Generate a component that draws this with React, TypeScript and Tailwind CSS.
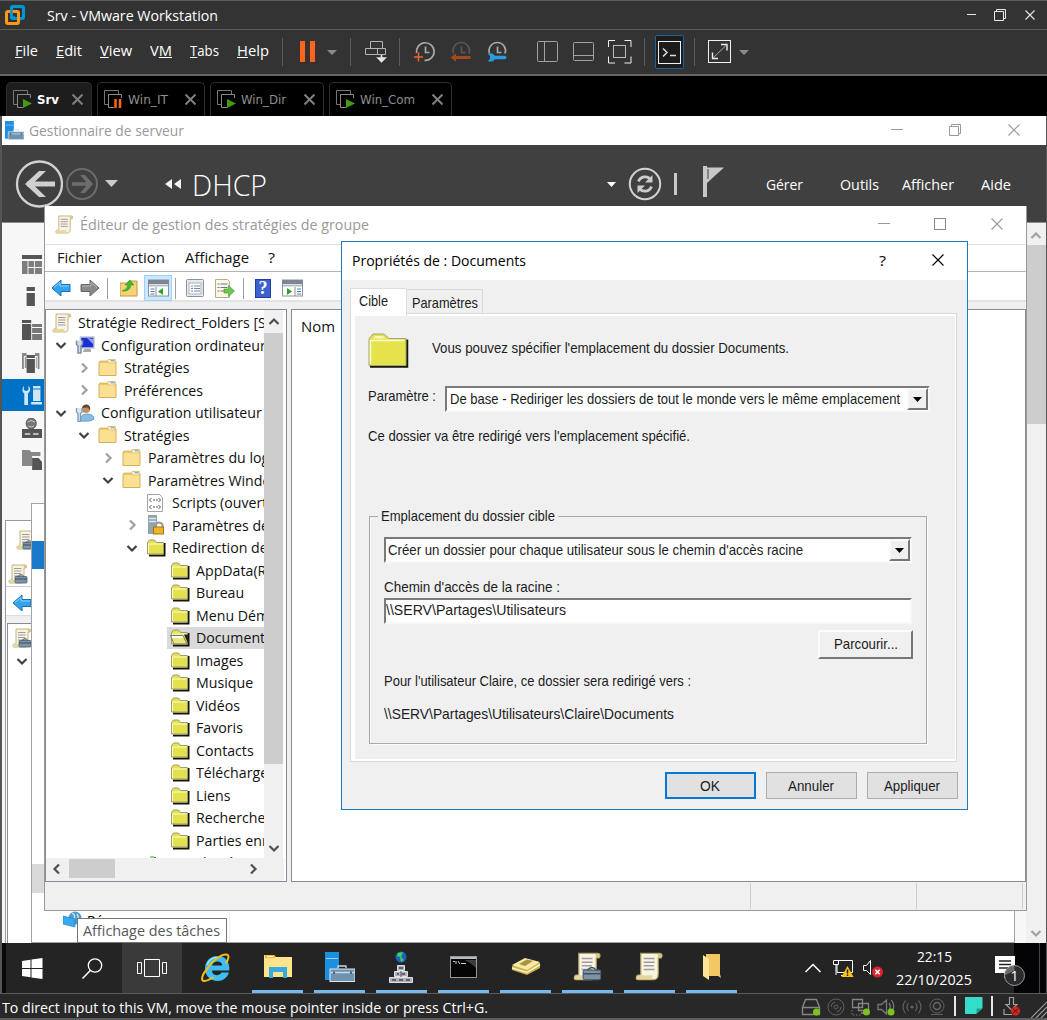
import React, { useLayoutEffect, useRef } from "react";

type P = { className?: string; children?: React.ReactNode };

/* Text squeezed or stretched horizontally to the width of its box. */
function Fit({ className = "", children }: P) {
  const box = useRef<HTMLSpanElement>(null);
  const text = useRef<HTMLSpanElement>(null);
  useLayoutEffect(() => {
    const b = box.current;
    const t = text.current;
    if (!b || !t) return;
    t.style.transform = "none";
    const natural = t.getBoundingClientRect().width;
    if (natural > 0) t.style.transform = `scaleX(${b.getBoundingClientRect().width / natural})`;
  }, []);
  return (
    <span ref={box} className={`block shrink-0 whitespace-nowrap ${className}`}>
      <span ref={text} className="inline-block origin-left">{children}</span>
    </span>
  );
}

function Svg({ w, h, className = "", children }: P & { w: number; h: number }) {
  return (
    <svg width={w} height={h} viewBox={`0 0 ${w} ${h}`} fill="none" className={`block shrink-0 ${className}`}>
      {children}
    </svg>
  );
}

const Minimize = ({ className = "", n = 12 }: { className?: string; n?: number }) => (
  <Svg w={n} h={12} className={className}><path d={`M0 5.5H${n}`} stroke="currentColor" /></Svg>
);
const Restore = ({ className = "" }: P) => (
  <Svg w={12} h={12} className={className}>
    <path d="M.5 2.5h9v9h-9zM2.5 2.5v-2h9v9h-2" stroke="currentColor" />
  </Svg>
);
const Close = ({ className = "", n = 12 }: { className?: string; n?: number }) => (
  <Svg w={n} h={n} className={className}>
    <path d={`M.5 .5L${n - 0.5} ${n - 0.5}M${n - 0.5} .5L.5 ${n - 0.5}`} stroke="currentColor" strokeWidth="1.1" />
  </Svg>
);
const Down = ({ className = "", w = 10, h = 5 }: { className?: string; w?: number; h?: number }) => (
  <Svg w={w} h={h} className={className}><path d={`M0 0H${w}L${w / 2} ${h}Z`} fill="currentColor" /></Svg>
);

/* ---------- Host window ---------- */

function TitleBar() {
  return (
    <div className="flex h-[30px] shrink-0 items-center border-y border-[#5c5c5c] bg-[#333] pl-[5px] text-white">
      <Svg w={20} h={20}>
        <rect x="6.5" y="1.5" width="12" height="12" rx="1.5" stroke="#0096d6" strokeWidth="3" />
        <rect x="1.5" y="6.5" width="12" height="12" rx="1.5" stroke="#f8981d" strokeWidth="3" />
        <path d="M6.5 5v7.5h3.500" stroke="#0096d6" strokeWidth="2.500" />
      </Svg>
      <Fit className="ml-[22px] w-[171px] text-[15px]">Srv - VMware Workstation</Fit>
      <div className="ml-auto flex items-center text-[#e8e8e8]">
        <Minimize n={9} />
        <Restore className="ml-[18px]" />
        <Close n={10} className="mr-[12px] ml-[19px]" />
      </div>
    </div>
  );
}

const Sep = ({ className = "" }: P) => <div className={`h-7 w-px shrink-0 bg-[#5c5c5c] ${className}`} />;

function Clock({ kind }: { kind: "add" | "back" | "manage" }) {
  const c = kind === "back" ? "#575757" : "#a8a8a8";
  return (
    <Svg w={22} h={22}>
      <path d={kind === "add" ? "M2.600 12A8.800 8.800 0 1 1 10.500 19.300" : "M3.600 12.500A8.200 8.200 0 1 1 19 12.500"} stroke={c} strokeWidth="1.700" />
      <path d="M11.500 5.500V11.500h4" stroke={c} strokeWidth="1.700" />
      {kind === "add" && <path d="M0 16h9M4.500 11.500v9" stroke="#f4642a" strokeWidth="1.500" />}
      {kind === "back" && <path d="M6 12.500v2.500h14.500v3H6v2.500l-5.500-4z" fill="#a04a20" />}
      {kind === "manage" && (
        <path d="M1.500 12.500h5l2.500 2.200h9.500q2 0 2 1.800t-2 1.800H9L6.500 20.500h-5L4 18v-3z" fill="#2a9be0" />
      )}
    </Svg>
  );
}

function MenuBar() {
  return (
    <div className="flex h-[46px] shrink-0 items-center border-b-2 border-[#666] bg-[#333] pl-[15px] text-[15px] text-white">
      <div className="mb-[5px] flex gap-[18px]">
        <Fit className="w-[23px]"><u>F</u>ile</Fit>
        <Fit className="w-[26px]"><u>E</u>dit</Fit>
        <Fit className="w-[32px]"><u>V</u>iew</Fit>
        <Fit className="w-[22px]">V<u>M</u></Fit>
        <Fit className="w-[29px]"><u>T</u>abs</Fit>
        <Fit className="w-[32px]"><u>H</u>elp</Fit>
      </div>
      <Sep className="ml-[13px]" />
      <div className="-mt-px ml-[17px] h-[21px] w-[5px] bg-[#ff641c]" />
      <div className="-mt-px ml-[5px] h-[21px] w-[5px] bg-[#ff641c]" />
      <Down className="ml-[12px] text-[#8a8a8a]" />
      <Sep className="ml-[13px]" />
      <Svg w={22} h={22} className="ml-[14px]">
        <path d="M5.500 7V.5h12V7M.5 7.500h12v6H.5zM12.500 7.500h8v6h-8z" stroke="#b4b4b4" />
        <path d="M16.500 14v6M13 17l3.500 3.500L20 17z" stroke="#e6e6e6" strokeWidth="1.600" fill="#e6e6e6" />
      </Svg>
      <Sep className="ml-[12px]" />
      <div className="ml-[14px]"><Clock kind="add" /></div>
      <div className="ml-[14px]"><Clock kind="back" /></div>
      <div className="ml-[14px]"><Clock kind="manage" /></div>
      <Sep className="ml-[14px] bg-transparent" />
      <Svg w={22} h={22} className="ml-[14px]">
        <rect x=".5" y=".5" width="20" height="20" rx="1" stroke="#a2a2a2" /><path d="M7.500 1v19" stroke="#a2a2a2" />
      </Svg>
      <Svg w={22} h={20} className="ml-[14px]">
        <rect x=".5" y=".5" width="20" height="18" rx="1" stroke="#a2a2a2" /><path d="M1 13.500h19" stroke="#a2a2a2" />
      </Svg>
      <Svg w={24} h={24} className="ml-[13px]">
        <path d="M.5 7V.5H7M16.500 .5H23V7M23 16.500V23h-6.500M7 23H.5v-6.500" stroke="#f0f0f0" /><rect x="5.500" y="5.500" width="12" height="12" stroke="#bbb" />
      </Svg>
      <Sep className="ml-[12px]" />
      <div className="ml-[10px] flex h-[34px] w-[29px] items-center justify-center rounded-xs border border-[#1b64a0] bg-[#1c1c1c]">
        <Svg w={23} h={23}>
          <rect x=".5" y=".5" width="22" height="22" stroke="#f0f0f0" />
          <path d="M5 7.500L9 11.500 5 15.500M12 14.500h6" stroke="#ddd" strokeWidth="1.500" />
        </Svg>
      </div>
      <Sep className="ml-[10px]" />
      <Svg w={24} h={24} className="ml-[13px]">
        <rect x=".5" y=".5" width="22" height="22" stroke="#f0f0f0" />
        <path d="M13 4.500h6v6M10 18.500H4.500v-6" stroke="#eee" strokeWidth="1.400" /><path d="M5 18L18.500 5" stroke="#aaa" />
      </Svg>
      <Down className="ml-[7px] text-[#8a8a8a]" />
    </div>
  );
}

function VmTab({ label, paused, active, width, text }: { label: string; paused?: boolean; active?: boolean; width: string; text: string }) {
  return (
    <div className={`flex h-[34px] items-center rounded-t-[5px] border border-b-0 border-[#2d2d2d] pb-px pl-[6px] ${width} ${active ? "bg-[#1d1d1d] font-bold text-white" : "text-[#8e8e8e]"}`}>
      <Svg w={19} h={19}>
        <path d="M4 14.500H.5V.5h14V4" stroke="#777" /><path d="M10 17.500H4.500V4.500h13V8" stroke="#8a8a8a" />
        {paused ? <path d="M11.500 9v9M16 9v9" stroke="#ff641c" strokeWidth="2.500" /> : <path d="M10 9l9 4.500-9 4.500z" fill="#449a12" />}
      </Svg>
      <Fit className={`mt-px ml-[5px] ${text}`}>{label}</Fit>
      <Close n={11} className="mr-[8px] ml-auto text-[#808080] [&>path]:stroke-2" />
    </div>
  );
}

function TabBar() {
  return (
    <div className="flex h-[40px] shrink-0 items-end gap-[5px] bg-black pl-[6px] font-['DejaVu_Sans'] text-[13px]">
      <VmTab label="Srv" active width="w-[86px]" text="w-[22px]" />
      <VmTab label="Win_IT" paused width="w-[108px]" text="w-[40px]" />
      <VmTab label="Win_Dir" width="w-[114px]" text="w-[45px]" />
      <VmTab label="Win_Com" width="w-[123px]" text="w-[55px]" />
    </div>
  );
}

/* ---------- Shared drawings ---------- */

const Scroll = ({ s = 20, tools, className = "" }: { s?: number; tools?: boolean; className?: string }) => (
  <svg width={s} height={s} viewBox="0 0 20 20" fill="none" className={`block shrink-0 ${className}`}>
    <path d="M4 1h13c2 0 2 2 1 3h-2v11c0 3-1 4-3 4H2c-2 0-1-3 0-3h2z" fill="#f9f4e0" stroke="#b5a468" strokeWidth=".8" />
    <path d="M15.500 1.500c2.500-1 3.500 1 2.500 2.500h-2z" fill="#d9c581" /><path d="M1 18.500c0-2 1-2.500 2-2.500h9v3H2z" fill="#e6d79d" />
    <path d="M6 4.500h7.500M6 7h7.500M6 9.500h7M6 12h7.500" stroke="#9d99a8" />
    {tools && <><rect x="7" y="12.500" width="12" height="6.500" rx="1" fill="#7e93a6" stroke="#4d6275" strokeWidth=".8" /><path d="M10 12.500q3-3.500 6 0M7 15h12" stroke="#3c4d5d" /></>}
  </svg>
);
const ServerManagerIcon = ({ s = 20 }: { s?: number }) => (
  <svg width={s} height={s} viewBox="0 0 30 30" fill="none" className="block shrink-0">
    <path d="M0 0h14v28H0z" fill="#1b8fe0" /><path d="M1 6.500h12" stroke="#9ad0f5" />
    <rect x="5" y="17" width="25" height="12.500" fill="#6e93b0" stroke="#dfe9f0" /><path d="M13 16v-2h8v2M6 20.500h24" stroke="#c8d9e5" strokeWidth="1.300" /><path d="M9 19.500v2.500M26 19.500v2.500" stroke="#49637a" strokeWidth="2" />
  </svg>
);
const BlueArrow = ({ right }: { right?: boolean }) => (
  <Svg w={20} h={18} className={right ? "-scale-x-100" : ""}>
    <path d="M1 9l9-8v4.500h9v7h-9V17z" fill={right ? "#8a8a8a" : "#34a3ec"} stroke={right ? "#666" : "#1173b8"} />
    <path d="M3 8.500L9 3.500V7h9" stroke={right ? "#b5b5b5" : "#8fd4ff"} />
  </Svg>
);
const Chevron = ({ d, className = "" }: { d: "up" | "down" | "left" | "right"; className?: string }) => {
  const path = { up: "M1.500 8L6 3.500 10.500 8", down: "M1.500 4L6 8.500 10.500 4", left: "M8 1.500L3.500 6 8 10.500", right: "M4 1.500L8.500 6 4 10.500" }[d];
  return <Svg w={12} h={12} className={className}><path d={path} stroke="currentColor" strokeWidth="2.200" /></Svg>;
};

/* ---------- Server manager ---------- */

function ServerManagerHeader() {
  return (
    <>
      <div className="flex h-[29px] shrink-0 items-center bg-white pl-[3px] text-[15px] text-[#999]">
        <ServerManagerIcon s={19} />
        <Fit className="mb-[2px] ml-[5px] w-[155px]">Gestionnaire de serveur</Fit>
        <div className="mr-[26px] mb-px ml-auto flex items-center">
          <Minimize /><Restore className="ml-[46px]" /><Close className="ml-[47px]" />
        </div>
      </div>
      <div className="flex h-[78px] shrink-0 items-center border-b border-[#8c8c8c] bg-[#404040] pl-[13px] text-[15px] text-white">
        <Svg w={48} h={48}>
          <circle cx="24.500" cy="24" r="22.500" stroke="#d2d2d2" strokeWidth="2.300" />
          <path d="M12 24h28" stroke="#d0d0d0" strokeWidth="5" /><path d="M31 11h-7L10 24 24 37h7L17.500 24z" fill="#d0d0d0" />
        </Svg>
        <Svg w={34} h={34} className="ml-[2px]">
          <circle cx="17" cy="17" r="15" stroke="#6d6d6d" strokeWidth="2" />
          <path d="M7 17h18" stroke="#6d6d6d" strokeWidth="3.500" /><path d="M15 8h5l8 9-8 9h-5l8-9z" fill="#6d6d6d" />
        </Svg>
        <Down w={13} h={7} className="ml-[6px] text-[#ccc]" />
        <Svg w={17} h={10} className="ml-[47px]"><path d="M7 0v10L0 5zM16 0v10L9 5z" fill="#f2f2f2" /></Svg>
        <Fit className="mt-[2px] ml-[10px] w-[75px] text-[29px] font-light">DHCP</Fit>
        <Down w={9} h={5} className="mt-px ml-[340px]" />
        <Svg w={34} h={34} className="ml-[12px]">
          <circle cx="17" cy="17" r="15.200" stroke="#d2d2d2" strokeWidth="2" />
          <path d="M10.500 14.500c2-5.500 9-6 12-2M23.500 19.500c-2 5.500-9 6-12 2" stroke="#ccc" strokeWidth="2.800" />
          <path d="M24.500 8v7.500h-7.500zM9.500 26v-7.500H17z" fill="#ccc" />
        </Svg>
        <div className="ml-[12px] h-[22px] w-[3px] bg-[#c8c8c8]" />
        <Svg w={23} h={31} className="-mt-[5px] ml-[25px]"><path d="M1 0h4v31H1z" fill="#c8c8c8" /><path d="M5 1.500h17L5 17z" fill="#c8c8c8" /><path d="M6 3v10" stroke="#404040" /></Svg>
        <Fit className="ml-[41px] w-[37px]">Gérer</Fit>
        <Fit className="ml-[37px] w-[39px]">Outils</Fit>
        <Fit className="ml-[23px] w-[52px]">Afficher</Fit>
        <Fit className="ml-[27px] w-[30px]">Aide</Fit>
      </div>
    </>
  );
}

const sideIcons = [
  <><path d="M0 0h22v4H0z" fill="#555" /><path d="M0 6h6v13H0zM7 6h6v6H7zM14 6h8v6h-8zM7 13h6v6H7zM14 13h8v6h-8z" fill="#7d7d7d" /></>,
  <><path d="M5 0h9v4H5zM5 6h9v13H5z" fill="#555" /></>,
  <><path d="M0 0h10v3H0zM0 4h10v16H0z" fill="#555" /><path d="M11 4h11v3H11zM11 8h11v5H11zM11 14h11v6H11z" fill="#777" /></>,
  <><path d="M0 0h5v3H2v13H0zM14 0h5v16h-2V3h-3z" fill="#888" /><path d="M3 4h2v11H3zM15 4h1v11h-1z" fill="#999" /><path d="M5 2h9v3H5zM5 6h9v14H5z" fill="#555" /></>,
  <><path d="M2 1v4l2.500 1L7 5V1c3 2 2 6-.5 7.500V20h-4V8.500C0 7 0 3 2 1zM12 1h8v15h-8zM10 17h12v2.500H10z" fill="#cfe7f8" /><path d="M12 4h8" stroke="#0072c6" /></>,
  <><circle cx="10" cy="5.500" r="5.500" fill="#777" stroke="#555" /><path d="M6 4q4-3 8 0M7 8q3 2 6 0" stroke="#ccc" /><path d="M0 11h22v9H0z" fill="#555" /><path d="M3 16h6M12 16h6" stroke="#ddd" strokeWidth="1.500" /></>,
  <><path d="M0 0h8l2 2h10v4h-9v10H0z" fill="#888" /><path d="M11 8h7l4 4v8H11z" fill="#555" /></>,
];

function Sidebar() {
  return (
    <div className="h-full w-[50px] shrink-0 bg-[#f7f7f7] pt-[25.5px]">
      {sideIcons.map((icon, i) => (
        <div key={i} className={`flex h-[32.6px] items-center pl-[20px] ${i === 4 ? "bg-[#0072c6]" : ""}`}>
          <Svg w={20} h={20} className="[&]:w-5"><g transform="scale(.92 1)">{icon}</g></Svg>
        </div>
      ))}
    </div>
  );
}

function MainScrollbar() {
  return (
    <div className="flex h-full w-5 shrink-0 flex-col items-center bg-[#f0f0f0] text-[#a0a0a0]">
      <div className="flex h-[22px] items-center pt-1"><Chevron d="up" /></div>
      <div className="h-[179px] w-full bg-[#cdcdcd]" />
      <Chevron d="down" className="mt-auto mb-1" />
    </div>
  );
}

/* ---------- Background windows ---------- */

function NetworkWindow() {
  return (
    <div className="absolute top-[387px] left-[29px] flex h-[440px] w-[984px] flex-col border border-[#a3a3a3] bg-white">
      <div className="mt-[10px] ml-[12px] h-[16px] w-4 bg-[#e9cf7c]" />
      <div className="mt-[11px] h-[28px] w-full bg-[#1979ca]" />
      <div className="mt-[295px] h-[30px] w-full bg-[#d9d9d9]" />
      <div className="ml-[31px] flex h-[49px] w-[167px] items-center border-r border-[#eee] pt-[4px] text-[15px] text-black">
        <Svg w={20} h={18}>
          <circle cx="12" cy="7" r="6.500" fill="#4f9cc7" /><path d="M9 2q4 2 2 6M14 3q2 3 1 8" stroke="#b7e1ee" strokeWidth="1.500" />
          <path d="M0 5l12 3v8L0 13z" fill="#35aaf2" stroke="#1479b8" strokeWidth=".6" />
        </Svg>
        <Fit className="ml-[4px] w-[47px]">Réseau</Fit>
      </div>
    </div>
  );
}

function PolicyConsoleWindow() {
  return (
    <div className="absolute top-[404px] left-[3px] flex h-[423px] w-[26px] flex-col overflow-hidden border-t border-l border-[#9a9a9a] bg-white">
      <Scroll tools className="mt-[9px] ml-[10px]" />
      <Scroll tools className="mt-[14px] ml-[2px]" />
      <div className="mt-[2px] h-px w-full shrink-0 bg-[#ccc]" />
      <div className="mt-[7px] ml-[6px] shrink-0"><BlueArrow /></div>
      <div className="mt-[3px] h-[8px] w-full shrink-0 border-t border-[#ddd] bg-[#f0f0f0]" />
      <div className="ml-px flex grow flex-col border-t border-l border-[#868b94]">
        <Scroll tools className="mt-[4px] ml-[4px]" />
        <Chevron d="down" className="mt-[7px] ml-[8px] text-[#404040]" />
      </div>
    </div>
  );
}

/* ---------- Group policy editor ---------- */

const TreeFolder = () => (
  <Svg w={20} h={20}>
    <path d="M1 3.500L2 2.500h8v-1.500h7.500v3V17.500H1z" fill="#e9c773" /><path d="M1 4h17v13.500H1z" fill="#fbdf93" stroke="#d7b05c" />
    <path d="M10 1.500h7v3.500h-7z" fill="#fff3cd" stroke="#d7b05c" strokeWidth=".6" /><path d="M12.500 2.800h4" stroke="#4aa0dd" />
  </Svg>
);
const YellowFolder = ({ open }: { open?: boolean }) => (
  <Svg w={20} h={19}>
    <path d="M3 17.500h15.500V5" stroke="#161600" strokeWidth="2" />
    <path d="M1.500 15V4.500l2-2.500h5l2 2.500h7V16H1.500z" fill="#e3e24c" stroke="#9b9b78" />
    <path d="M2.500 15v-9h14" stroke="#fdfdcf" />
    {open && <><path d="M.5 7.500h12.500l4 8.500H4z" fill="#e9e67a" stroke="#777" /><path d="M2 9h11" stroke="#fff" strokeWidth="2" /><path d="M14 6.500h4v9z" fill="#222" /></>}
  </Svg>
);
const ComputerIcon = () => (
  <Svg w={20} h={18}><rect x="5.500" y="1" width="13.500" height="11" fill="#1c2ed8" stroke="#c5c8ce" strokeWidth="1.500" /><path d="M12 2l6 1v5z" fill="#8ca9f8" /><path d="M9 13h7v3H8z" fill="#aaa" /><path d="M1.500 4.500v4l1.500 1.500v7h3v-7l1.500-2V4.500" stroke="#7c91a6" strokeWidth="1.500" fill="#cfdbe6" /></Svg>
);
const UserIcon = () => (
  <Svg w={20} h={18}><circle cx="11" cy="5" r="4" fill="#c68e5d" /><path d="M7 4q1-4 5-3.500 4 1 3 6l-2-3z" fill="#5c483a" /><path d="M5 17q0-7 7-7t7 5q-3 3-14 2z" fill="#88bce5" stroke="#4d8bb9" strokeWidth=".7" /><path d="M1.500 4v4L3 9.500v8h2.500v-8L7 8V4" stroke="#7d99b4" strokeWidth="1.300" fill="#dbe8f2" /></Svg>
);
const ScriptIcon = () => (
  <Svg w={20} h={20}><path d="M1.500 1.500h12l3 3v14h-15z" fill="#fff" stroke="#a5a5a5" /><path d="M5.500 5L3.500 7l2 2M12.500 5l2 2-2 2M5.500 12l-2 2 2 2M12.500 12l2 2-2 2" stroke="#555" /><path d="M7 7h5M7 14h5" stroke="#555" strokeDasharray="2 1" /></Svg>
);
const SecurityIcon = () => (
  <Svg w={20} h={20}><path d="M2 0h9v19H2z" fill="#92a3b2" /><path d="M3 3.500h7M3 6.500h7" stroke="#e0e7ed" strokeWidth="1.500" /><path d="M9.500 12V9.500q3.500-4 7 0V12" stroke="#9a9a9a" strokeWidth="2" /><rect x="7.500" y="12" width="10" height="7" fill="#eeb52c" stroke="#a87407" /></Svg>
);
const QosIcon = () => (
  <Svg w={20} h={20}><path d="M4 3h4v15H4z" fill="#8be07b" /><path d="M8 4h2v14H8z" fill="#2c8a2c" /><path d="M12 9h4v9h-4z" fill="#88a" /></Svg>
);

const indent = ["pl-[6px]", "pl-[29px]", "pl-[52px]", "pl-[76px]", "pl-[100px]", "pl-[124px]"];
type Node = [number, React.ReactNode, string, ("down" | "right")?, boolean?];
const tree: Node[] = [
  [0, <Scroll />, "Stratégie Redirect_Folders [SRV"],
  [1, <ComputerIcon />, "Configuration ordinateur", "down"],
  [2, <TreeFolder />, "Stratégies", "right"],
  [2, <TreeFolder />, "Préférences", "right"],
  [1, <UserIcon />, "Configuration utilisateur", "down"],
  [2, <TreeFolder />, "Stratégies", "down"],
  [3, <TreeFolder />, "Paramètres du logiciel", "right"],
  [3, <TreeFolder />, "Paramètres Windows", "down"],
  [4, <ScriptIcon />, "Scripts (ouverture"],
  [4, <SecurityIcon />, "Paramètres de sécurité", "right"],
  [4, <YellowFolder />, "Redirection de dossiers", "down"],
  [5, <YellowFolder />, "AppData(Roaming)"],
  [5, <YellowFolder />, "Bureau"],
  [5, <YellowFolder />, "Menu Démarrer"],
  [5, <YellowFolder open />, "Documents", undefined, true],
  [5, <YellowFolder />, "Images"],
  [5, <YellowFolder />, "Musique"],
  [5, <YellowFolder />, "Vidéos"],
  [5, <YellowFolder />, "Favoris"],
  [5, <YellowFolder />, "Contacts"],
  [5, <YellowFolder />, "Téléchargements"],
  [5, <YellowFolder />, "Liens"],
  [5, <YellowFolder />, "Recherches"],
  [5, <YellowFolder />, "Parties enregistrées"],
  [4, <QosIcon />, "QoS basée sur la stratégie"],
];

function TreePane() {
  return (
    <div className="flex h-[573px] w-[242px] shrink-0 flex-col border border-[#868b94] bg-white">
      <div className="flex h-[548px]">
        <div className="w-[218px] shrink-0 overflow-hidden pt-[1.500px]">
          {tree.map(([level, icon, label, state, selected], i) => (
            <div key={i} className={`flex h-[22.5px] items-center ${indent[level]}`}>
              {level > 0 && level < 5 && (
                <span className={`-ml-[20px] w-[20px] shrink-0 ${state === "right" ? "text-[#a0a0a0]" : "text-[#404040]"}`}>
                  {state && <Chevron d={state} />}
                </span>
              )}
              <span className={`-ml-[3px] flex h-full grow items-center pl-[3px] ${selected ? "bg-[#d9d9d9]" : ""}`}>
                {icon}
                <span className="mb-px ml-[6px] origin-left scale-x-[0.945] whitespace-nowrap">{label}</span>
              </span>
            </div>
          ))}
        </div>
        <div className="flex w-[19px] shrink-0 flex-col items-center bg-[#f0f0f0] text-[#505050]">
          <Chevron d="up" className="mt-[6px] mb-[5px]" />
          <div className="h-[431px] w-full bg-[#cdcdcd]" />
          <Chevron d="down" className="mt-auto mb-[4px]" />
        </div>
      </div>
      <div className="flex h-[23px] w-[238px] items-center bg-[#f0f0f0] pb-[2px] pl-[5px] text-[#505050]">
        <Chevron d="left" />
        <div className="ml-[6px] h-[19px] w-[46px] bg-[#cdcdcd]" />
        <Chevron d="right" className="mr-[25px] ml-auto" />
      </div>
    </div>
  );
}

const PaneIcon = ({ flip }: { flip?: boolean }) => (
  <Svg w={21} h={18}>
    <rect x=".5" y="1" width="20" height="16" fill="#fff" stroke="#8b929b" /><path d="M0 1h21v4H0z" fill="#7c8793" /><path d="M1 6.500h19" stroke="#b7bec6" strokeWidth="2" />
    <path d={flip ? "M13 8v9" : "M8 8v9"} stroke="#8b929b" /><path d={flip ? "M15 10h4M15 12.500h4M15 15h4" : "M2.500 10h4M2.500 12.500h4M2.500 15h4"} stroke="#4a7fb5" />
    <path d={flip ? "M5 9l5 3.500L5 16z" : "M15 9l-5 3.500L15 16z"} fill="#28a428" />
  </Svg>
);
const ToolSep = ({ className = "" }: P) => <div className={`h-[21px] w-px bg-[#a0a0a0] ${className}`} />;

function EditorWindow() {
  return (
    <div className="absolute top-[90px] left-[42px] flex h-[705px] w-[983px] flex-col border border-t-0 border-[#999] bg-[#f0f0f0] text-[15px] text-[#111]">
      <div className="flex h-[39px] shrink-0 items-center border-b border-[#ddd] bg-white pl-[10px] text-[#999]">
        <Scroll s={19} className="mb-px" />
        <Fit className="mb-[2px] ml-[6px] w-[289px]">Éditeur de gestion des stratégies de groupe</Fit>
        <div className="mr-[23px] mb-[2px] ml-auto flex items-center">
          <Minimize />
          <Svg w={12} h={12} className="ml-[44px]"><rect x=".5" y=".5" width="11" height="11" stroke="#888" /></Svg>
          <Close className="ml-[45px]" />
        </div>
      </div>
      <div className="flex h-[27px] shrink-0 items-center border-b border-[#b0b4ba] bg-white pb-[2px] pl-[12px]">
        <Fit className="w-[45px]">Fichier</Fit>
        <Fit className="ml-[19px] w-[44px]">Action</Fit>
        <Fit className="ml-[20px] w-[64px]">Affichage</Fit>
        <Fit className="ml-[19px] w-[7px]">?</Fit>
      </div>
      <div className="flex h-[30px] shrink-0 items-center border-b-2 border-[#e3e3e3] bg-white pt-[4px] pl-[6px]">
        <BlueArrow />
        <div className="ml-[9px]"><BlueArrow right /></div>
        <ToolSep className="ml-[7px]" />
        <Svg w={18} h={18} className="ml-[12px]"><path d="M0 4h7l2-2h8v15H0z" fill="#f4d37c" stroke="#c49a3d" /><path d="M2 12q5-1 6-6H5l5-5 4 5h-3q-1 7-9 6z" fill="#42b82a" stroke="#2b8a1b" strokeWidth=".5" /></Svg>
        <div className="ml-[6px] flex h-[26px] w-[28px] items-center justify-center border border-[#99d1ff] bg-[#cce8ff]"><PaneIcon /></div>
        <ToolSep className="ml-[3px]" />
        <Svg w={19} h={19} className="ml-[10px]"><rect x=".5" y=".5" width="17" height="17" rx="1" fill="#e8ebee" stroke="#8a929c" /><rect x="3" y="4" width="12" height="11" fill="#fff" stroke="#a9b1ba" /><path d="M5 7h2M5 9.500h2M5 12h2M8 7h6M8 9.500h6M8 12h6" stroke="#7089a4" /></Svg>
        <Svg w={20} h={19} className="ml-[10px]"><path d="M.5 .5h12l2 2v16H.5z" fill="#fdf7e0" stroke="#b4ad93" /><path d="M2.500 5h2M2.500 8.500h2M2.500 12h2M5.500 5h7M5.500 8.500h7M5.500 12h5" stroke="#65749c" /><path d="M9 10h4.500V6.500l6 5.500-6 5.500V14H9z" fill="#6cc94e" stroke="#3f962b" strokeWidth=".6" /></Svg>
        <ToolSep className="ml-[8px]" />
        <div className="ml-[11px] flex h-[19px] w-[16px] items-center justify-center border border-[#1c3fa8] bg-[#3d62cf] font-['Liberation_Serif'] text-[18px] font-bold text-white">?</div>
        <div className="ml-[11px]"><PaneIcon flip /></div>
      </div>
      <div className="flex shrink-0 gap-[4px] pt-[7px]">
        <TreePane />
        <div className="h-[573px] grow border border-[#868b94] bg-white pt-[6px] pl-[9px]"><Fit className="w-[34px]">Nom</Fit></div>
      </div>
      <div className="flex grow justify-end py-px pr-[3px]">
        <div className="w-[166px] border-l border-[#ccc]" />
        <div className="w-[107px] border-x border-[#ccc]" />
      </div>
    </div>
  );
}

/* ---------- Folder properties dialog ---------- */

const sunken = "border-2 border-t-[#7a7a7a] border-l-[#7a7a7a] border-r-[#f8f8f8] border-b-[#f8f8f8] bg-white";

function Combo({ children, className }: P) {
  return (
    <div className={`flex h-[26px] items-center justify-between ${sunken} ${className}`}>
      {children}
      <div className="flex h-[22px] w-[21px] items-center justify-center border-2 border-t-[#fafafa] border-r-[#777] border-b-[#777] border-l-[#fafafa] bg-[#f0f0f0]">
        <Down w={9} h={5} className="text-black" />
      </div>
    </div>
  );
}

function DocumentsDialog() {
  return (
    <div className="absolute top-[125px] left-[339px] flex h-[569px] w-[627px] flex-col border border-[#1b7ac7] bg-[#f0f0f0] text-[15px] text-[#1b1b22]">
      <div className="flex h-[38px] shrink-0 items-center bg-white pl-[10px] text-black">
        <Fit className="mb-[2px] w-[174px]">Propriétés de : Documents</Fit>
        <Fit className="mb-[2px] ml-[353px] w-[7px]">?</Fit>
        <Close className="mb-[2px] ml-[46px]" />
      </div>
      <div className="flex grow flex-col px-[8px] pt-[8px] font-['Liberation_Sans']">
        <div className="flex items-end">
          <div className="relative z-10 -mb-[3px] h-[28px] w-[57px] border border-b-0 border-[#ddd] bg-white pt-px pl-[8px] leading-[22px]"><Fit className="w-[29px]">Cible</Fit></div>
          <div className="h-[24px] w-[76px] border border-b-0 border-l-0 border-[#d9d9d9] pl-[5px] leading-[25px]"><Fit className="w-[66px]">Paramètres</Fit></div>
        </div>
        <div className="flex h-[449px] w-[607px] flex-col border border-[#dadada] bg-[#f0f0f0] shadow-[inset_4px_2px_0_#fff,inset_-1px_-2px_0_#fff]">
          <div className="mt-[19px] ml-[17px] flex h-[36px] items-center">
            <Svg w={41} h={36}>
              <path d="M2 33.500h37V6.500" stroke="#171700" strokeWidth="2.500" />
              <path d="M1 32V6l4-5h11l5 4.500h17v27H1z" fill="#e4e34a" stroke="#a3a37e" /><path d="M2.500 31V7.500h34" stroke="#fdfdd8" strokeWidth="1.500" /><path d="M5 5.500L7 3h8l2 2.500z" fill="#f7f7b0" />
            </Svg>
            <Fit className="mb-[6px] ml-[23px] w-[357px]">Vous pouvez spécifier l'emplacement du dossier Documents.</Fit>
          </div>
          <div className="mt-[17px] ml-[17px] flex">
            <Fit className="w-[68px]">Paramètre :</Fit>
            <Combo className="ml-[9px] w-[485px] pl-[3px]"><Fit className="w-[450px]">De base - Rediriger les dossiers de tout le monde vers le même emplacement</Fit></Combo>
          </div>
          <Fit className="mt-[14px] ml-[17px] w-[322px]">Ce dossier va être redirigé vers l'emplacement spécifié.</Fit>
          <fieldset className="mt-[60px] ml-[18px] h-[238px] w-[558px] border border-[#a8a8a8] pl-[14px] shadow-[inset_1px_0_0_#fafafa,1px_1px_0_#fafafa]">
            <legend className="-ml-[6px] px-[3px]"><Fit className="w-[174px]">Emplacement du dossier cible</Fit></legend>
            <Combo className="mt-[11px] w-[528px] pl-[2px]"><Fit className="w-[415px]">Créer un dossier pour chaque utilisateur sous le chemin d'accès racine</Fit></Combo>
            <Fit className="mt-[14px] w-[176px]">Chemin d'accès de la racine :</Fit>
            <div className={`mt-px h-[26px] w-[528px] leading-[20px] ${sunken}`}><Fit className="w-[180px]">\\SERV\Partages\Utilisateurs</Fit></div>
            <div className="mt-[6px] ml-[434px] flex h-[29px] w-[95px] items-center justify-center border-2 border-t-[#fcfcfc] border-r-[#777] border-b-[#777] border-l-[#fcfcfc] pb-px"><Fit className="w-[64px]">Parcourir...</Fit></div>
            <Fit className="mt-[12px] w-[307px]">Pour l'utilisateur Claire, ce dossier sera redirigé vers :</Fit>
            <Fit className="mt-[13px] w-[290px]">\\SERV\Partages\Utilisateurs\Claire\Documents</Fit>
          </fieldset>
        </div>
        <div className="mt-[10px] flex justify-end gap-[10px] pr-px">
          <div className="flex h-[27px] w-[91px] items-center justify-center border-2 border-[#0078d7] bg-[#e1e1e1]"><Fit className="mr-px w-[20px]">OK</Fit></div>
          <div className="flex h-[27px] w-[91px] items-center justify-center border border-[#adadad] bg-[#e1e1e1]"><Fit className="mr-px w-[46px]">Annuler</Fit></div>
          <div className="flex h-[27px] w-[91px] items-center justify-center border border-[#adadad] bg-[#e1e1e1]"><Fit className="mr-[2px] w-[56px]">Appliquer</Fit></div>
        </div>
      </div>
    </div>
  );
}

/* ---------- Guest taskbar ---------- */

const apps: React.ReactNode[] = [
  <Svg w={28} h={26}>
    <path d="M0 1h10l2 2h16v20H0z" fill="#ffe48c" /><path d="M1 1h9l1 3H1z" fill="#f5b92e" /><path d="M3 2.500h6" stroke="#fff" />
    <path d="M5 24V13h18v11h-4v-6H9v6z" fill="#35abdf" />
  </Svg>,
  <ServerManagerIcon s={30} />,
  <Svg w={26} h={32}>
    <circle cx="12" cy="6" r="5.500" fill="#1c62c4" /><path d="M9 2l5-1-2 5 3 3-3 2-1-5-3-1z" fill="#47d051" />
    <path d="M8.500 14.500h7v5h-7zM5.500 20.500h13v5h-13zM.5 26.500h23v5H.5z" fill="#adb0b8" stroke="#e0e0e5" />
    <path d="M10 17h4M8 23h2M13 23h3M3 29h4M10 29h4M17 29h4" stroke="#444a58" strokeWidth="1.500" /><path d="M12 20v6" stroke="#555" />
  </Svg>,
  <Svg w={28} h={24}><rect x=".5" y="1.500" width="26" height="21" fill="#050505" stroke="#93989d" /><path d="M1 2h25v2H1z" fill="#b8bdc1" /><path d="M3 6.500h2M6 6v3M8 6l2 3M11 8.500h5" stroke="#ccc" /><path d="M14 5h12v8q-6-6-12-8z" fill="#3d3d3d" /></Svg>,
  <Svg w={30} h={24}><path d="M1 11L14 4l15 4v5L16 20 1 15z" fill="#c9b152" /><path d="M1 10L14 3l15 4-13 8z" fill="#f8eaa6" /><path d="M8 9l8-4.500 6 1.500-8 5z" fill="#a8933e" /><path d="M1 13l15 4.500 13-8" stroke="#fff4bd" strokeWidth="1.500" /></Svg>,
  <Scroll s={29} tools />,
  <Scroll s={29} />,
  <Svg w={18} h={26}><path d="M5 0h12v20l1 4-3-2H3V0z" fill="#f2c864" /><path d="M0 1l6 4v21l-6-4z" fill="#ffe294" /></Svg>,
];

function Taskbar() {
  return (
    <div className="flex h-[50px] shrink-0 items-center bg-[linear-gradient(90deg,#080808_0_4px,#242424_4px_1012px,#040406_1012px)] text-[15px] text-white">
      <Svg w={21} h={21} className="ml-[20px]"><path d="M0 3l8.500-1.300V10H0zM9.500 1.500L20.500 0v10h-11zM0 11h8.500v8.300L0 18zM9.500 11h11v10L9.500 19.500z" fill="#fff" /></Svg>
      <Svg w={21} h={21} className="ml-[39px]"><circle cx="13" cy="7.500" r="6.700" stroke="#fff" strokeWidth="1.300" /><path d="M8.300 12.500L.5 20.500" stroke="#fff" strokeWidth="1.500" /></Svg>
      <div className="ml-[19px] flex h-full w-[60px] items-center justify-center bg-[#3a3a3a]">
        <Svg w={30} h={20}><path d="M7.500 1.500h15v17h-15zM.5 4.500h4v11h-4zM25.500 4.500h4v11h-4z" stroke="#fff" /></Svg>
      </div>
      <Svg w={30} h={30} className="mr-[21px] ml-[19px]">
        <path fillRule="evenodd" d="M16.500 3C8.500 3 4 9 4 15.500 4 23 9.500 28 16.500 28c5.500 0 9.500-3 11.500-8.500h-7.500c-3 4.500-9.500 3-9.500-2h17.300C29 9 24.500 3 16.500 3zM11 12.500c1-5.500 10-5.500 10.300 0z" fill="#3fbdf5" />
        <path d="M6 12q3-8 12-7.500" stroke="#a6e8ff" strokeWidth="1.200" />
        <path d="M6.500 15.500C.5 22-.5 28.500 3.500 28c3-.3 6-2 9-4M6.500 15.500C11 8 20 1 25.500 1.500c3.500.5 1.500 5.500-.5 9" stroke="#f2bc19" strokeWidth="2" />
      </Svg>
      <div className="flex h-full gap-[11px]">
        {apps.map((a, i) => (
          <div key={i} className="flex h-full w-[51px] items-center justify-center border-b-[3px] border-[#76b9ed]">{a}</div>
        ))}
      </div>
      <Svg w={16} h={10} className="ml-[68px]"><path d="M.5 9L8 1.500 15.500 9" stroke="#fff" strokeWidth="1.500" /></Svg>
      <Svg w={22} h={20} className="ml-[12px]"><path d="M5 2.500h14.500v12H4V7M.5 2.500h5v4h-5zM3 7v10M8 17.500h6" stroke="#fff" /><path d="M14.500 8L20.500 19h-12z" fill="#fdc21c" /><path d="M14.500 11.500v4M14.500 16.500v1.500" stroke="#222" strokeWidth="1.500" /></Svg>
      <Svg w={22} h={19} className="ml-[8px]"><path d="M.5 6.500h3l4-5v14l-4-4h-3z" stroke="#fff" /><circle cx="14.500" cy="13" r="5.500" fill="#dc2430" /><path d="M12.300 10.800l4.400 4.400M16.700 10.800l-4.400 4.400" stroke="#fff" strokeWidth="1.500" /></Svg>
      <div className="ml-[11px] flex flex-col items-center leading-[23px]"><Fit className="w-[35px]">22:15</Fit><Fit className="w-[76px]">22/10/2025</Fit></div>
      <Svg w={31} h={32} className="mt-[6px] ml-[23px]">
        <path d="M0 1h20v17h-6l-5 5v-5H0z" fill="#fff" /><path d="M4 6h12M4 9.500h12M4 13h12" stroke="#222" strokeWidth="1.300" />
        <circle cx="19.500" cy="20.500" r="10" fill="#2c2c2e" stroke="#999" /><path d="M9.500 20A10 10 0 0 1 19.500 10.500v5l-8 4z" fill="#888" fillOpacity=".7" /><text x="15.500" y="25.500" fill="#fff" fontSize="14">1</text>
      </Svg>
      <div className="ml-[13px] h-full w-px bg-[#444]" />
    </div>
  );
}

/* ---------- Host status bar ---------- */

function StatusBar() {
  return (
    <div className="flex h-[27px] shrink-0 items-center border-t border-b-2 border-[#5c5c5c] bg-[#282828] pl-[2px] text-[15px] text-white">
      <Fit className="mt-[2px] w-[486px]">To direct input to this VM, move the mouse pointer inside or press Ctrl+G.</Fit>
      <div className="ml-[313px] flex items-center gap-[6px] pt-[2px]">
        <Svg w={20} h={18}><path d="M1.500 9.500L4.500 1.500h11l3 8v7h-17zM1.500 9.500h17" stroke="#858585" strokeWidth="1.400" /><circle cx="15.500" cy="14" r="3.500" fill="#7cc31d" /></Svg>
        <Svg w={18} h={18}><circle cx="9" cy="9" r="8" stroke="#606060" /><circle cx="9" cy="9" r="2" stroke="#606060" /><path d="M4 9q0-4 4-5M14 9q0 4-4 5" stroke="#606060" /></Svg>
        <Svg w={20} h={18}><path d="M1.500 1.500h10v8h-10zM7.500 5.500h10v7h-10zM10 15h6" stroke="#858585" strokeWidth="1.300" /><path d="M1 12v5h9" stroke="#777" strokeDasharray="1.500 1.500" /><circle cx="15.500" cy="14" r="3.500" fill="#7cc31d" /></Svg>
        <Svg w={19} h={18}><path d="M1 6.500h3.500l5-4.500v14l-5-4.500H1zM12 5q2.500 3.500 0 7M14.500 2q4 6 1 10" stroke="#777" strokeWidth="1.300" /><circle cx="14" cy="14" r="3.500" fill="#7cc31d" /></Svg>
        <Svg w={20} h={18}><circle cx="10" cy="9" r="1.500" fill="#666" /><path d="M6.500 5q-3 4 0 8M13.500 5q3 4 0 8M3.500 2.500q-5 6.500 0 13M16.500 2.500q5 6.500 0 13" stroke="#606060" strokeWidth="1.200" /></Svg>
        <Svg w={18} h={18}><circle cx="9" cy="8" r="7" stroke="#606060" /><circle cx="9" cy="8" r="3.500" stroke="#666" strokeWidth="1.500" /><path d="M3 16.500h12" stroke="#606060" /></Svg>
      </div>
      <div className="ml-[8px] h-5 w-[2px] bg-[#e8e8e8]" />
      <Svg w={18} h={18} className="ml-[9px]"><path d="M0 0h17.500v11L11 17H0z" fill="#35dcc8" /><path d="M11.500 17v-5.500h6z" fill="#1b9f90" /></Svg>
      <div className="ml-[8px] h-5 w-[2px] bg-[#e8e8e8]" />
      <Svg w={18} h={19} className="ml-[10px]"><path d="M6.500 .5h4v7h3.500L8.500 13 3 7.500h3.500zM1 12v5.500h8" stroke="#a0a0a0" strokeWidth="1.200" /><circle cx="12.500" cy="14" r="4.500" fill="#d5281e" /><path d="M10 11.500l5 5M15 11.500l-5 5" stroke="#401010" /></Svg>
      <Svg w={16} h={16} className="mt-auto ml-auto"><path d="M0 16L16 0M5 16L16 5M10 16l6-6" stroke="#999" strokeWidth="1.200" /></Svg>
    </div>
  );
}

export default function App() {
  return (
    <div className="flex h-[1020px] w-[1047px] flex-col overflow-hidden bg-black font-['Open_Sans',sans-serif] leading-[20px]">
      <TitleBar />
      <MenuBar />
      <TabBar />
      <div className="flex h-[877px] shrink-0 flex-col border-r border-l-2 border-[#555]">
        <div className="relative flex h-[827px] shrink-0 flex-col overflow-hidden">
          <ServerManagerHeader />
          <div className="flex min-h-0 grow justify-between bg-[#f7f7f7]"><Sidebar /><MainScrollbar /></div>
          <NetworkWindow />
          <PolicyConsoleWindow />
          <EditorWindow />
          <DocumentsDialog />
          <div className="absolute top-[802px] left-[75px] flex h-[25px] w-[150px] items-center border border-[#767676] bg-white pb-px pl-[5px] text-[15px] text-[#575757]">
            <Fit className="w-[137px]">Affichage des tâches</Fit>
          </div>
        </div>
        <Taskbar />
      </div>
      <StatusBar />
    </div>
  );
}
